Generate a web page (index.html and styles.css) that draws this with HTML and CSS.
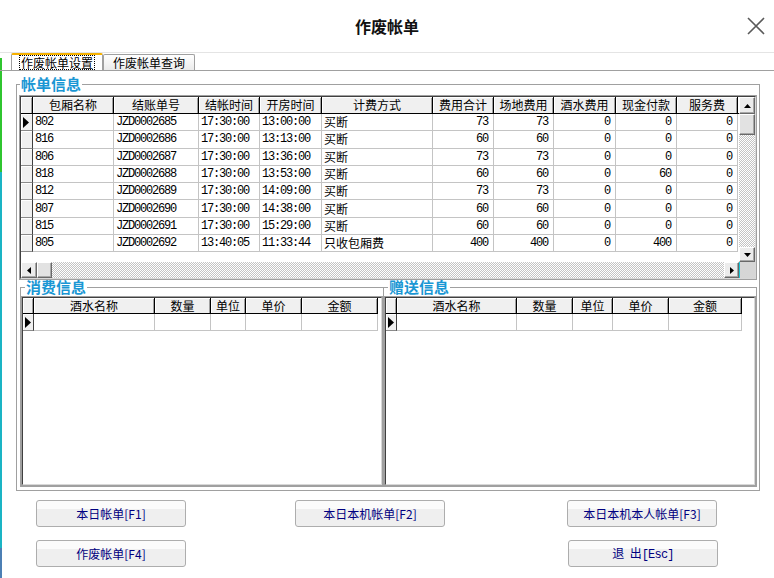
FILE: index.html
```html
<!DOCTYPE html>
<html lang="zh-CN">
<head>
<meta charset="utf-8">
<title>作废帐单</title>
<link rel="stylesheet" href="styles.css">
</head>
<body>
<div class="window">
  <header class="titlebar">
    <span></span>
    <h1 class="title">作废帐单</h1>
    <button class="close" aria-label="关闭">
      <svg width="18" height="18" viewBox="0 0 18 18"><path d="M1 1L17 17M17 1L1 17" stroke="#5a5a5a" stroke-width="1.6" fill="none"/></svg>
    </button>
  </header>

  <nav class="tabs">
    <div class="tab active"><span class="focus">作废帐单设置</span></div>
    <div class="tab">作废帐单查询</div>
  </nav>

  <main class="page">
    <fieldset class="group main-group">
      <legend>帐单信息</legend>
      <div class="sunken main-grid">
        <div class="sunken-in">
          <div class="grid-body">
            <div class="viewport">
              <table class="grid">
                <colgroup>
                  <col style="width:12px"><col style="width:81px"><col style="width:85px"><col style="width:61px"><col style="width:62px"><col style="width:111px"><col style="width:61px"><col style="width:60px"><col style="width:62px"><col style="width:61px"><col style="width:61px"><col style="width:60px">
                </colgroup>
                <thead>
                  <tr class="head">
                    <th></th><th>包厢名称</th><th>结账单号</th><th>结帐时间</th><th>开房时间</th><th>计费方式</th><th>费用合计</th><th>场地费用</th><th>酒水费用</th><th>现金付款</th><th>服务费</th><th class="clip">赠送金额</th>
                  </tr>
                </thead>
                <tbody>
                  <tr class="row"><td class="ind"><svg class="tri" width="6" height="11" viewBox="0 0 6 11"><polygon points="0,0 6,5.5 0,11" fill="#000"/></svg></td><td class="m">802</td><td class="m">JZD0002685</td><td class="m">17:30:00</td><td class="m">13:00:00</td><td>买断</td><td class="m n">73</td><td class="m n">73</td><td class="m n">0</td><td class="m n">0</td><td class="m n">0</td><td class="blank"></td></tr>
                  <tr class="row"><td class="ind"></td><td class="m">816</td><td class="m">JZD0002686</td><td class="m">17:30:00</td><td class="m">13:13:00</td><td>买断</td><td class="m n">60</td><td class="m n">60</td><td class="m n">0</td><td class="m n">0</td><td class="m n">0</td><td class="blank"></td></tr>
                  <tr class="row"><td class="ind"></td><td class="m">806</td><td class="m">JZD0002687</td><td class="m">17:30:00</td><td class="m">13:36:00</td><td>买断</td><td class="m n">73</td><td class="m n">73</td><td class="m n">0</td><td class="m n">0</td><td class="m n">0</td><td class="blank"></td></tr>
                  <tr class="row"><td class="ind"></td><td class="m">818</td><td class="m">JZD0002688</td><td class="m">17:30:00</td><td class="m">13:53:00</td><td>买断</td><td class="m n">60</td><td class="m n">60</td><td class="m n">0</td><td class="m n">60</td><td class="m n">0</td><td class="blank"></td></tr>
                  <tr class="row"><td class="ind"></td><td class="m">812</td><td class="m">JZD0002689</td><td class="m">17:30:00</td><td class="m">14:09:00</td><td>买断</td><td class="m n">73</td><td class="m n">73</td><td class="m n">0</td><td class="m n">0</td><td class="m n">0</td><td class="blank"></td></tr>
                  <tr class="row"><td class="ind"></td><td class="m">807</td><td class="m">JZD0002690</td><td class="m">17:30:00</td><td class="m">14:38:00</td><td>买断</td><td class="m n">60</td><td class="m n">60</td><td class="m n">0</td><td class="m n">0</td><td class="m n">0</td><td class="blank"></td></tr>
                  <tr class="row"><td class="ind"></td><td class="m">815</td><td class="m">JZD0002691</td><td class="m">17:30:00</td><td class="m">15:29:00</td><td>买断</td><td class="m n">60</td><td class="m n">60</td><td class="m n">0</td><td class="m n">0</td><td class="m n">0</td><td class="blank"></td></tr>
                  <tr class="row"><td class="ind"></td><td class="m">805</td><td class="m">JZD0002692</td><td class="m">13:40:05</td><td class="m">11:33:44</td><td>只收包厢费</td><td class="m n">400</td><td class="m n">400</td><td class="m n">0</td><td class="m n">400</td><td class="m n">0</td><td class="blank"></td></tr>
                </tbody>
              </table>
            </div>
            <div class="vscroll">
              <div class="sbtn"><svg width="7" height="4" viewBox="0 0 7 4"><polygon points="0,4 3.5,0 7,4" fill="#000"/></svg></div>
              <div class="thumb vthumb"></div>
              <div class="track"></div>
              <div class="sbtn down"><svg width="7" height="4" viewBox="0 0 7 4"><polygon points="0,0 7,0 3.5,4" fill="#000"/></svg></div>
            </div>
          </div>
          <div class="hscroll">
            <div class="sbtn hbtn"><svg width="4" height="7" viewBox="0 0 4 7"><polygon points="4,0 4,7 0,3.5" fill="#000"/></svg></div>
            <div class="thumb hthumb"></div>
            <div class="track"></div>
            <div class="sbtn hbtn right"><svg width="4" height="7" viewBox="0 0 4 7"><polygon points="0,0 4,3.5 0,7" fill="#000"/></svg></div>
            <div class="corner"></div>
          </div>
        </div>
      </div>

      <div class="subs">
        <fieldset class="group sub left">
          <legend>消费信息</legend>
          <div class="sunken sub-grid">
            <div class="sunken-in">
              <table class="grid">
                <colgroup>
                  <col style="width:11px"><col style="width:121px"><col style="width:56px"><col style="width:35px"><col style="width:56px"><col style="width:76px">
                </colgroup>
                <thead>
                  <tr class="head sub-head"><th></th><th>酒水名称</th><th>数量</th><th>单位</th><th>单价</th><th>金额</th></tr>
                </thead>
                <tbody>
                  <tr class="row"><td class="ind"><svg class="tri" width="6" height="11" viewBox="0 0 6 11"><polygon points="0,0 6,5.5 0,11" fill="#000"/></svg></td><td></td><td></td><td></td><td></td><td></td></tr>
                </tbody>
              </table>
            </div>
          </div>
        </fieldset>
        <fieldset class="group sub right">
          <legend>赠送信息</legend>
          <div class="sunken sub-grid">
            <div class="sunken-in">
              <table class="grid">
                <colgroup>
                  <col style="width:11px"><col style="width:120px"><col style="width:56px"><col style="width:40px"><col style="width:56px"><col style="width:73px">
                </colgroup>
                <thead>
                  <tr class="head sub-head"><th></th><th>酒水名称</th><th>数量</th><th>单位</th><th>单价</th><th>金额</th></tr>
                </thead>
                <tbody>
                  <tr class="row"><td class="ind"><svg class="tri" width="6" height="11" viewBox="0 0 6 11"><polygon points="0,0 6,5.5 0,11" fill="#000"/></svg></td><td></td><td></td><td></td><td></td><td></td></tr>
                </tbody>
              </table>
            </div>
          </div>
        </fieldset>
      </div>
    </fieldset>

    <div class="buttons">
      <button class="btn">本日帐单[F1]</button>
      <button class="btn">本日本机帐单[F2]</button>
      <button class="btn">本日本机本人帐单[F3]</button>
      <button class="btn">作废帐单[F4]</button>
      <span></span>
      <button class="btn esc">退&nbsp;&nbsp;出<span class="m">[Esc]</span></button>
    </div>
  </main>
</div>
</body>
</html>
```

FILE: styles.css
```css
* { box-sizing: border-box; }

html, body {
  margin: 0;
  padding: 0;
}

body {
  width: 774px;
  height: 578px;
  overflow: hidden;
  font-family: "Noto Sans CJK SC", "Noto Sans", sans-serif;
  font-size: 12px;
  color: #000;
  background:
    linear-gradient(to bottom, transparent 0 58px, #2fc52f 58px 172px, #1ab4c4 172px 548px, #4c7fb4 548px) no-repeat 0 0 / 2px 100%,
    #fff;
}

.window {
  width: 774px;
  height: 578px;
}

/* title bar */
.titlebar {
  height: 53px;
  border-bottom: 1px solid #e4e4e4;
  display: grid;
  grid-template-columns: 1fr auto 1fr;
  align-items: center;
}

.title {
  margin: 0;
  font-size: 16px;
  font-weight: bold;
  line-height: 20px;
  color: #111;
  padding-bottom: 1px;
}

.close {
  justify-self: end;
  margin-right: 9px;
  width: 18px;
  height: 18px;
  padding: 0;
  border: 0;
  background: none;
  display: flex;
}

/* tabs */
.tabs {
  height: 18px;
  border-bottom: 1px solid #a0a0a0;
  display: flex;
  align-items: flex-end;
  padding-left: 11px;
}

.tab {
  width: 92px;
  height: 16px;
  border: 1px solid #a0a0a0;
  border-bottom: 0;
  border-radius: 2px 2px 0 0;
  background: linear-gradient(to bottom, #ffffff, #ebebeb);
  display: flex;
  align-items: center;
  justify-content: center;
  font-size: 12px;
  line-height: 14px;
  padding-top: 1px;
}

.tab.active {
  height: 17px;
  background: #fff;
  border-top: 2px solid #f6b100;
  padding-top: 0;
}

.focus {
  outline: 1px dotted #000;
  outline-offset: 0;
  padding: 0 1px;
  line-height: 13px;
}

/* page */
.page {
  padding: 5px 14px 0 16px;
}

.group {
  margin: 0;
  border: 1px solid #a0a0a0;
  min-width: 0;
}

.group > legend {
  padding: 0 1px;
  font-size: 15px;
  line-height: 16px;
  font-weight: bold;
  color: #1a97d4;
}

.main-group {
  width: 744px;
  padding: 3px 2px 3px 2px;
}

.main-group > legend {
  margin-left: 1px;
}

/* sunken grid frame */
.sunken {
  border: 1px solid #a0a0a0;
  background: #fff;
}

.sunken-in {
  border: 1px solid;
  border-color: #404040 #d8d8d8 #d8d8d8 #404040;
  height: 100%;
  overflow: hidden;
  background: #fff;
}

.main-grid {
  height: 185px;
}

.grid-body {
  display: flex;
  height: 165px;
}

.viewport {
  flex: 1;
  overflow: hidden;
}

/* data grid */
.grid {
  table-layout: fixed;
  border-collapse: separate;
  border-spacing: 0;
  width: max-content;
}

.grid th,
.grid td {
  padding: 0;
  overflow: hidden;
  white-space: nowrap;
  font-weight: normal;
}

.head {
  height: 17px;
}

.head th {
  background: #f0f0f0;
  border-right: 1px solid #000;
  border-bottom: 1px solid #000;
  box-shadow: inset 1px 1px 0 #fff, inset -1px 0 0 #a0a0a0;
  text-align: center;
  font-size: 12px;
  line-height: 14px;
}

.head th.clip {
  text-align: left;
  padding-left: 2px;
}

.sub-head {
  height: 16px;
}

.row {
  height: 17.3px;
}

.sub-grid .row {
  height: 17px;
}

.row td {
  border-right: 1px solid #c4c4c4;
  border-bottom: 1px solid #c4c4c4;
  padding: 0 2px;
  font-size: 12px;
  line-height: 14px;
  background: #fff;
}

.row td.blank {
  border-right: 0;
  border-bottom: 0;
}

.row td.ind {
  background: #f0f0f0;
  border-right: 1px solid #404040;
  border-bottom: 1px solid #8a8a8a;
  box-shadow: inset 1px 1px 0 #fff;
  padding: 0 0 0 2px;
  vertical-align: middle;
}

.tri {
  display: block;
}

.m,
.row td.m {
  font-family: "Liberation Mono", "DejaVu Sans Mono", monospace;
  font-size: 12px;
  letter-spacing: -1.2px;
}

.row td.n {
  text-align: right;
  padding-right: 5px;
}

/* scrollbars */
.sbtn {
  background: #ececec;
  border: 1px solid;
  border-color: #fff #696969 #696969 #fff;
  box-shadow: inset -1px -1px 0 #a8a8a8;
  display: flex;
  align-items: center;
  justify-content: center;
}

.thumb {
  background: #e2e2e2;
  border: 1px solid;
  border-color: #fff #696969 #696969 #fff;
  box-shadow: inset -1px -1px 0 #a8a8a8;
}

.track {
  flex: 1;
  background: repeating-conic-gradient(#c4c4c4 0% 25%, #ffffff 0% 50%) 0 0 / 2px 2px;
}

.vscroll {
  width: 16px;
  display: flex;
  flex-direction: column;
}

.vscroll .sbtn {
  height: 17px;
}

.vscroll .sbtn.down {
  height: 15px;
}

.vthumb {
  height: 21px;
}

.hscroll {
  height: 16px;
  display: flex;
}

.hbtn {
  width: 16px;
}

.hbtn.right {
  width: 15px;
}

.hthumb {
  width: 15px;
}

.corner {
  width: 16px;
  background: #d6d6d6;
  border-left: 1px solid #18c8d8;
}

/* sub panels */
.subs {
  display: flex;
  margin-top: -1px;
}

.sub {
  padding: 1px 0 0 0;
}

.sub > legend {
  margin-left: 4px;
}

.sub.left {
  width: 364px;
  margin-left: 1px;
}

.sub.right {
  width: 374px;
  margin-left: -1px;
}

.sub-grid {
  height: 190px;
}

/* buttons */
.buttons {
  margin-top: 9px;
  padding-left: 20px;
  display: grid;
  grid-template-columns: 259px 272px 150px;
  row-gap: 13px;
}

.btn {
  width: 150px;
  height: 27px;
  margin: 0;
  padding: 0;
  border: 1px solid #adadad;
  border-radius: 3px;
  background: linear-gradient(to bottom, #fbfbfb 0, #fbfbfb 34%, #efefef 34%, #efefef 100%);
  color: #000080;
  font-family: "Noto Sans CJK SC", "Noto Sans", sans-serif;
  font-size: 12px;
  line-height: 14px;
}

.btn.esc {
  margin-left: 1px;
}

.btn .m {
  font-size: 12px;
  letter-spacing: -0.8px;
}
```
